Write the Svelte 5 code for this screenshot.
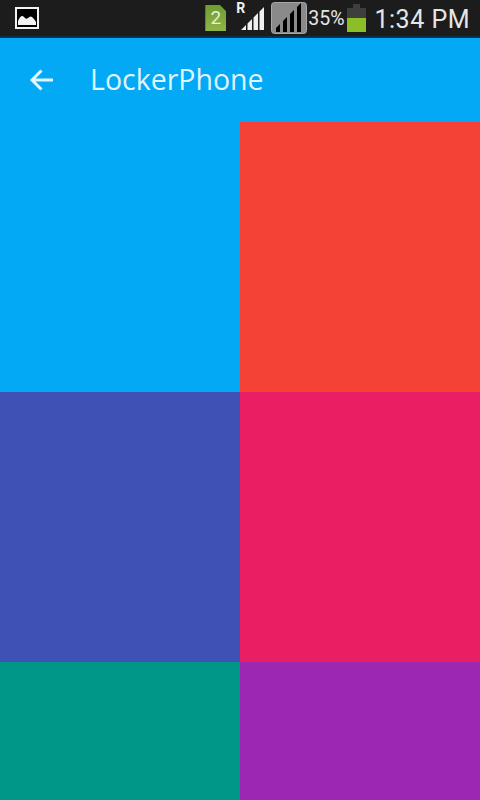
<script>
    const tiles = ["#03a9f4", "#f44336", "#3f51b5", "#e91e63", "#009688", "#9c27b0"];
</script>

<div class="phone">
    <div class="status">
        <svg class="pic" width="24" height="22" viewBox="0 0 24 22">
            <rect x="1" y="1" width="22" height="20" fill="#000" stroke="#f2f2f2" stroke-width="2" />
            <path d="M3 18 L3 14 Q6 7 9 10 Q11 13 13 11 Q16 8 18 11 Q20 13 21 15 L21 18 Z" fill="#f2f2f2" />
        </svg>
        <div class="spacer"></div>
        <div class="sim">2</div>
        <div class="signal">
            <span class="roam">R</span>
            <svg width="30" height="28" viewBox="0 0 30 28">
                <path d="M5 26 L10 21 V26 Z M11.500 26 V19.500 L16 15 V26 Z M17.500 26 V13.500 L22 9 V26 Z M23.500 26 V7.500 L28 3 V26 Z" fill="#f0f0f0" />
            </svg>
        </div>
        <div class="signal-box">
            <svg width="36" height="32" viewBox="0 0 36 32">
                <rect x="0.5" y="0.5" width="35" height="31" rx="3" fill="#8a8a8a" stroke="#a8a8a8" />
                <path d="M5 30 V26 L9 22 V30 Z M12 30 V19 L16 15 V30 Z M19 30 V12 L23 8 V30 Z M26 30 V5 L30 1 V30 Z" fill="#000" />
            </svg>
        </div>
        <span class="pct">35%</span>
        <svg class="batt" width="19" height="28" viewBox="0 0 19 28">
            <rect x="6" y="0" width="7" height="4" fill="#3e3e3e" />
            <rect x="0" y="4" width="19" height="10" fill="#3e3e3e" />
            <rect x="0" y="14" width="19" height="14" fill="#8cbf26" />
        </svg>
        <span class="clock">1:34 PM</span>
    </div>
    <div class="bar">
        <svg class="back" width="26" height="24" viewBox="0 0 26 24">
            <path d="M24 12 H3 M12.500 2.500 L3 12 L12.500 21.500" fill="none" stroke="#e3f6ff" stroke-width="3" />
        </svg>
        <span class="title">LockerPhone</span>
    </div>
    <div class="grid">
        {#each tiles as color}
            <div class="tile" style="background-color: {color}"></div>
        {/each}
    </div>
</div>

<style>
    :global(body) {
        margin: 0;
    }

    .phone {
        width: 480px;
        height: 800px;
        overflow: hidden;
        font-family: "Roboto", "Liberation Sans", sans-serif;
    }

    .status {
        height: 38px;
        box-sizing: border-box;
        background-color: #1c1c1c;
        border-bottom: 2px solid #0a3145;
        display: flex;
        align-items: center;
        padding: 0 10px 0 15px;
        color: #e6e6e6;
    }

    .spacer {
        flex-grow: 1;
    }

    .sim {
        width: 21px;
        height: 26px;
        margin-right: 10px;
        background: linear-gradient(#6f9c2e, #8fb54a);
        color: #e8f0d8;
        font-size: 19px;
        line-height: 26px;
        text-align: center;
        clip-path: polygon(0 0, 70% 0, 100% 25%, 100% 100%, 0 100%);
    }

    .signal {
        position: relative;
        width: 30px;
        height: 28px;
        margin-right: 5px;
    }

    .signal svg {
        display: block;
    }

    .roam {
        position: absolute;
        left: 0;
        top: -4px;
        font-size: 14px;
        font-weight: bold;
        color: #f0f0f0;
    }

    .signal-box {
        height: 32px;
        margin-right: 1px;
    }

    .signal-box svg {
        display: block;
    }

    .pct {
        font-size: 19.5px;
        margin-right: 3px;
    }

    .batt {
        margin-right: 8px;
    }

    .clock {
        font-size: 25px;
        letter-spacing: 0.5px;
        padding-top: 2px;
    }

    .bar {
        height: 84px;
        background-color: #03a9f4;
        display: flex;
        align-items: center;
        padding-left: 29px;
    }

    .back {
        margin-right: 36px;
    }

    .title {
        font-family: "Open Sans", "Roboto", sans-serif;
        font-size: 28.5px;
        color: #dff5ff;
        margin-left: -1px;
        padding-bottom: 2px;
    }

    .grid {
        display: grid;
        grid-template-columns: 240px 240px;
        grid-auto-rows: 270px;
    }
</style>
